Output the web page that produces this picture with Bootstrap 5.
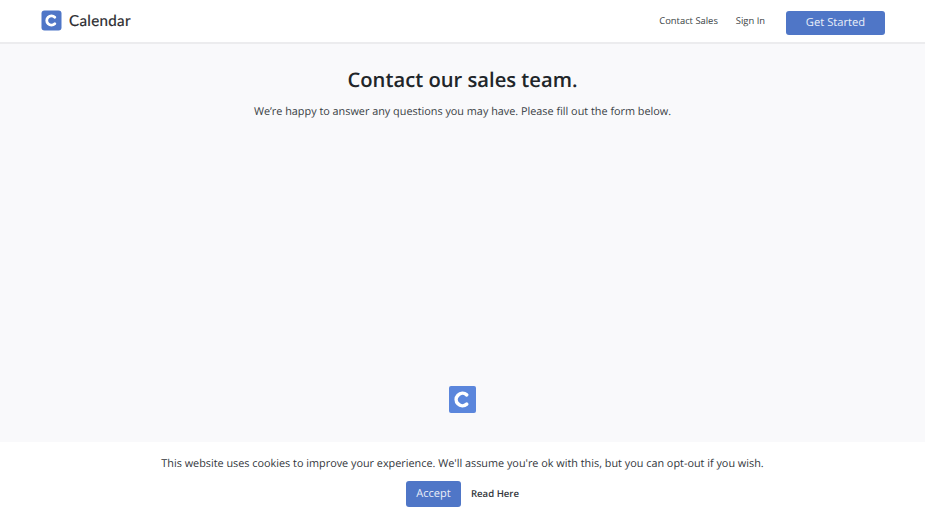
<!DOCTYPE html>
<html lang="en">
<head>
  <meta charset="UTF-8">
  <title>Contact Sales - Calendar</title>
  <meta name="viewport" content="width=device-width, initial-scale=1">
  <link href="https://cdn.jsdelivr.net/npm/bootstrap@5.3.0/dist/css/bootstrap.min.css" rel="stylesheet">
  <style>
    html, body { height: 100%; }
    body { background: #f9f9fb; font-family: "Open Sans", "Liberation Sans", sans-serif; color: #212529; overflow: hidden; text-rendering: geometricPrecision; }
    .top-bar { height: 44px; background: #fff; border-bottom: 2px solid #ececee; padding: 0 40px 0 41px; }
    .brand-word { font-family: "Lato", "Liberation Sans", sans-serif; font-size: 15.2px; color: #2b2b2f; letter-spacing: .3px; margin-left: 7px; -webkit-text-stroke: .2px #2b2b2f; }
    .top-link { font-size: 9.4px; color: #3a3f45; text-decoration: none; }
    .top-gap { margin-left: 18px; }
    .btn-start { background: #4f76c7; color: #e9eef8; font-size: 11.2px; width: 99px; height: 24px; line-height: 24px; padding: 0; border-radius: 3px; border: 0; margin: 4px 0 0 21px; }
    .page-title { font-size: 20.2px; font-weight: 600; margin: 20px 0 0; line-height: 30px; color: #212529; }
    .page-sub { font-size: 10.85px; color: #3a3f45; margin: 9px 0 0; line-height: 18px; }
    .loader-icon { margin-top: 265px; }
    .cookie-bar { background: #fff; height: 78px; padding-top: 13px; }
    .cookie-text { font-size: 10.85px; color: #33373c; line-height: 18px; margin: 0 0 8px; }
    .btn-accept { background: #4f76c7; color: #e9eef8; font-size: 11px; width: 55px; height: 26px; line-height: 26px; padding: 0; border-radius: 3px; border: 0; }
    .read-link { font-size: 9.6px; font-weight: 600; color: #33373c; text-decoration: none; margin-left: 10px; }
  </style>
</head>
<body class="d-flex flex-column">
  <nav class="top-bar d-flex align-items-center justify-content-between flex-shrink-0">
    <a href="#" class="d-flex align-items-center text-decoration-none">
      <svg width="21" height="21" viewBox="0 0 21 21">
        <rect x="0.5" y="0.5" width="20" height="20" rx="3" fill="#4f76c7"/>
        <path d="M13.8 7.2a4.7 4.7 0 1 0 0 6.6" fill="none" stroke="#fff" stroke-width="2.8" stroke-linecap="round"/>
      </svg>
      <span class="brand-word">Calendar</span>
    </a>
    <div class="d-flex align-items-center">
      <a href="#" class="top-link">Contact Sales</a>
      <a href="#" class="top-link top-gap">Sign In</a>
      <a href="#" class="btn btn-start">Get Started</a>
    </div>
  </nav>
  <main class="flex-grow-1 d-flex flex-column align-items-center text-center">
    <h1 class="page-title">Contact our sales team.</h1>
    <p class="page-sub">We’re happy to answer any questions you may have. Please fill out the form below.</p>
    <svg class="loader-icon" width="27" height="27" viewBox="0 0 27 27">
      <rect width="27" height="27" rx="2" fill="#5b86dc"/>
      <path d="M17.7 8.8a6.3 6.3 0 1 0 0 9.4" fill="none" stroke="#fff" stroke-width="3.6" stroke-linecap="round"/>
    </svg>
  </main>
  <footer class="cookie-bar text-center flex-shrink-0">
    <p class="cookie-text">This website uses cookies to improve your experience. We'll assume you're ok with this, but you can opt-out if you wish.</p>
    <div class="d-flex align-items-center justify-content-center">
      <a href="#" class="btn btn-accept">Accept</a>
      <a href="#" class="read-link">Read Here</a>
    </div>
  </footer>
  <script src="https://cdn.jsdelivr.net/npm/bootstrap@5.3.0/dist/js/bootstrap.bundle.min.js"></script>
</body>
</html>
